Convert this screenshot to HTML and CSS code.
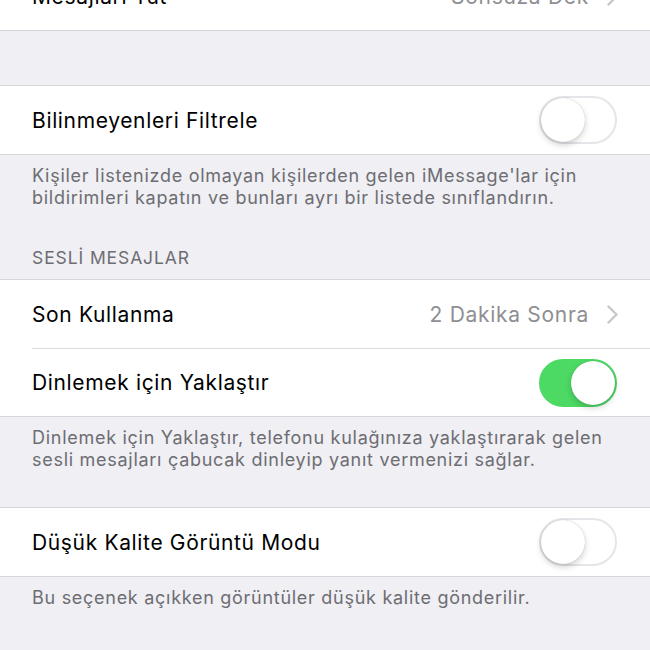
FILE: index.html
```html
<!DOCTYPE html>
<html lang="tr">
<head>
<meta charset="utf-8">
<title>Mesajlar</title>
<link rel="stylesheet" href="styles.css">
</head>
<body>
<div class="screen">
  <div class="group group-top">
    <div class="cell">
      <span class="label">Mesajları Tut</span>
      <span class="detail">Sonsuza Dek</span>
      <svg class="chevron" viewBox="0 0 11 19" aria-hidden="true"><path d="M1.5 1.5 L9.5 9.5 L1.5 17.5"/></svg>
    </div>
  </div>

  <div class="group group-first">
    <div class="cell">
      <span class="label">Bilinmeyenleri Filtrele</span>
      <span class="switch"><span class="knob"></span></span>
    </div>
  </div>
  <p class="footer">Kişiler listenizde olmayan kişilerden gelen iMessage'lar için bildirimleri kapatın ve bunları ayrı bir listede sınıflandırın.</p>

  <h2 class="header">SESLİ MESAJLAR</h2>
  <div class="group">
    <div class="cell">
      <span class="label">Son Kullanma</span>
      <span class="detail">2 Dakika Sonra</span>
      <svg class="chevron" viewBox="0 0 11 19" aria-hidden="true"><path d="M1.5 1.5 L9.5 9.5 L1.5 17.5"/></svg>
    </div>
    <div class="cell">
      <span class="label">Dinlemek için Yaklaştır</span>
      <span class="switch on"><span class="knob"></span></span>
    </div>
  </div>
  <p class="footer">Dinlemek için Yaklaştır, telefonu kulağınıza yaklaştırarak gelen sesli mesajları çabucak dinleyip yanıt vermenizi sağlar.</p>

  <div class="group group-spaced">
    <div class="cell">
      <span class="label">Düşük Kalite Görüntü Modu</span>
      <span class="switch"><span class="knob"></span></span>
    </div>
  </div>
  <p class="footer">Bu seçenek açıkken görüntüler düşük kalite gönderilir.</p>
</div>
</body>
</html>
```

FILE: styles.css
```css
html, body {
  margin: 0;
  padding: 0;
  background: #efeff4;
}

body {
  font-family: Inter, Roboto, "Noto Sans", "Liberation Sans", sans-serif;
  -webkit-font-smoothing: antialiased;
  overflow: hidden;
}

.screen {
  width: 650px;
  height: 650px;
  overflow: hidden;
}

/* grouped table sections */
.group {
  background: #fff;
  border-top: 1px solid #d6d6da;
  border-bottom: 1px solid #d6d6da;
}

.group-top {
  border-top: none;
  margin-top: -38px;
}

.group-first {
  margin-top: 54px;
}

.group-spaced {
  margin-top: 36px;
}

.cell {
  position: relative;
  height: 68px;
  display: flex;
  align-items: center;
  padding: 0 32px;
  box-sizing: border-box;
}

.cell + .cell::before {
  content: "";
  position: absolute;
  left: 32px;
  right: 0;
  top: -1px;
  height: 1px;
  background: #dcdce0;
}

.cell + .cell {
  margin-top: 1px;
  height: 67px;
}

.label {
  flex: 1;
  font-size: 21px;
  color: #000;
  letter-spacing: 0.65px;
}

.detail {
  font-size: 21px;
  color: #8e8e93;
  margin-right: 18px;
  letter-spacing: 0.7px;
}

.chevron {
  width: 11px;
  height: 19px;
  fill: none;
  stroke: #c7c7cc;
  stroke-width: 2.4;
  stroke-linecap: round;
  stroke-linejoin: round;
}

/* toggle switch */
.switch {
  position: relative;
  width: 78px;
  height: 48px;
  box-sizing: border-box;
  border-radius: 24px;
  border: 2px solid #e5e5ea;
  background: #fff;
  margin-right: 1px;
}

.switch .knob {
  position: absolute;
  top: 0;
  left: 0;
  width: 44px;
  height: 44px;
  border-radius: 50%;
  background: #fff;
  box-shadow: 0 3px 6px rgba(0, 0, 0, 0.18), 0 0 1px rgba(0, 0, 0, 0.25);
}

.switch.on {
  background: #4cd964;
  border-color: #4cd964;
}

.switch.on .knob {
  left: auto;
  right: 0;
}

/* section texts */
.footer {
  margin: 0;
  padding: 10px 32px 0;
  font-size: 18px;
  line-height: 22px;
  color: #6d6d72;
  letter-spacing: 0.72px;
}

.header {
  margin: 39px 0 0;
  padding: 0 32px 11px;
  font-size: 17.5px;
  line-height: 20px;
  font-weight: 400;
  color: #6d6d72;
  letter-spacing: 0.9px;
}
```
